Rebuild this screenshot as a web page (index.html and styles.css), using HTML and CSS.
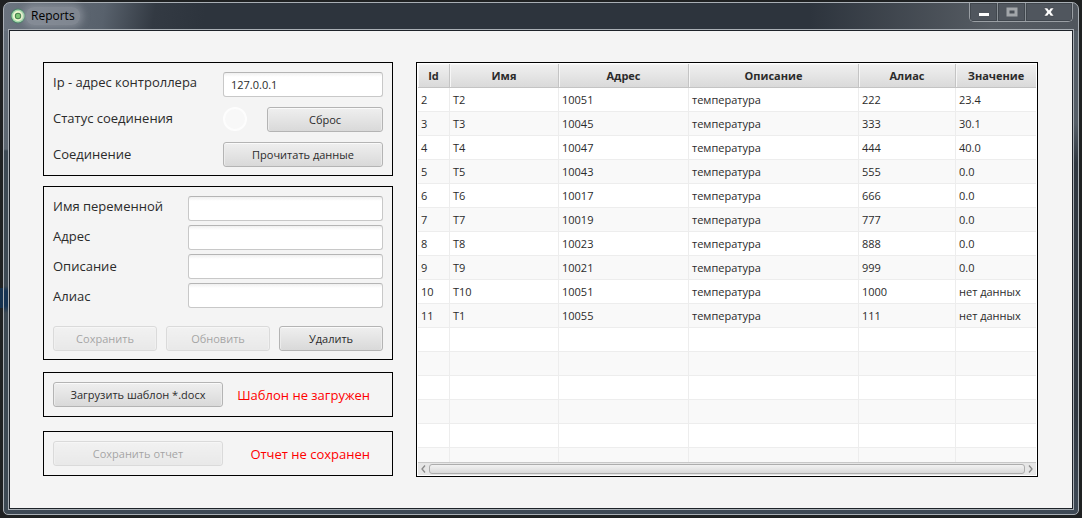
FILE: index.html
```html
<!DOCTYPE html>
<html lang="ru">
<head>
<meta charset="utf-8">
<title>Reports</title>
<link rel="stylesheet" href="styles.css">
</head>
<body>
<div class="window">
  <header class="titlebar">
    <svg class="app-icon" width="16" height="16" viewBox="0 0 16 16" aria-hidden="true">
      <circle cx="8" cy="8" r="7.400" fill="#4b7f68"/>
      <circle cx="8" cy="8" r="6.500" fill="#a6dcae"/>
      <circle cx="8" cy="8" r="5" fill="#f1fad2"/>
      <circle cx="8" cy="8" r="3.200" fill="#43804c"/>
      <circle cx="8" cy="8" r="2.200" fill="#7cc874"/>
    </svg>
    <h1 class="title">Reports</h1>
    <div class="controls">
      <button class="control" type="button" aria-label="Свернуть">
        <svg width="12" height="12" viewBox="0 0 12 12"><rect x="1" y="7" width="10" height="3" fill="#fff"/></svg>
      </button>
      <button class="control" type="button" aria-label="Развернуть" disabled>
        <svg width="12" height="12" viewBox="0 0 12 12"><rect x="2" y="3" width="8" height="6" fill="#4a5058" stroke="#a2a6aa" stroke-width="3"/></svg>
      </button>
      <button class="control control-close" type="button" aria-label="Закрыть">
        <svg width="12" height="12" viewBox="0 0 12 12"><path d="M1 2h3.400L6 4.200 7.600 2H11L8 6l3 4H7.600L6 7.800 4.400 10H1l3-4z" fill="#fff" stroke="#3a3f46" stroke-width=".5"/></svg>
      </button>
    </div>
  </header>

  <main class="client">
    <div class="sidebar">
      <form class="panel connection">
        <div class="labels labels-wide">
          <label for="ip">Ip - адрес контроллера</label>
          <span>Статус соединения</span>
          <span>Соединение</span>
        </div>
        <div class="fields">
          <input class="field" id="ip" type="text" value="127.0.0.1">
          <div class="status-row">
            <span class="status-light"></span>
            <button class="btn btn-reset" type="button">Сброс</button>
          </div>
          <button class="btn" type="button">Прочитать данные</button>
        </div>
      </form>

      <form class="panel variable">
        <div class="variable-form">
          <div class="labels">
            <label for="name">Имя переменной</label>
            <label for="address">Адрес</label>
            <label for="description">Описание</label>
            <label for="alias">Алиас</label>
          </div>
          <div class="fields">
            <input class="field" id="name" type="text">
            <input class="field" id="address" type="text">
            <input class="field" id="description" type="text">
            <input class="field" id="alias" type="text">
          </div>
        </div>
        <div class="actions">
          <button class="btn" type="button" disabled>Сохранить</button>
          <button class="btn" type="button" disabled>Обновить</button>
          <button class="btn" type="button">Удалить</button>
        </div>
      </form>

      <section class="panel file template">
        <button class="btn btn-file" type="button">Загрузить шаблон *.docx</button>
        <p class="message">Шаблон не загружен</p>
      </section>

      <section class="panel file report">
        <button class="btn btn-file" type="button" disabled>Сохранить отчет</button>
        <p class="message">Отчет не сохранен</p>
      </section>
    </div>

    <section class="grid-box">
      <div class="viewport">
        <table class="grid">
          <colgroup>
            <col class="c-id"><col class="c-name"><col class="c-address"><col class="c-description"><col class="c-alias"><col class="c-value">
          </colgroup>
          <thead>
            <tr><th>Id</th><th>Имя</th><th>Адрес</th><th>Описание</th><th>Алиас</th><th>Значение</th></tr>
          </thead>
          <tbody>
            <tr><td>2</td><td>T2</td><td>10051</td><td>температура</td><td>222</td><td>23.4</td></tr>
            <tr><td>3</td><td>T3</td><td>10045</td><td>температура</td><td>333</td><td>30.1</td></tr>
            <tr><td>4</td><td>T4</td><td>10047</td><td>температура</td><td>444</td><td>40.0</td></tr>
            <tr><td>5</td><td>T5</td><td>10043</td><td>температура</td><td>555</td><td>0.0</td></tr>
            <tr><td>6</td><td>T6</td><td>10017</td><td>температура</td><td>666</td><td>0.0</td></tr>
            <tr><td>7</td><td>T7</td><td>10019</td><td>температура</td><td>777</td><td>0.0</td></tr>
            <tr><td>8</td><td>T8</td><td>10023</td><td>температура</td><td>888</td><td>0.0</td></tr>
            <tr><td>9</td><td>T9</td><td>10021</td><td>температура</td><td>999</td><td>0.0</td></tr>
            <tr><td>10</td><td>T10</td><td>10051</td><td>температура</td><td>1000</td><td>нет данных</td></tr>
            <tr><td>11</td><td>T1</td><td>10055</td><td>температура</td><td>111</td><td>нет данных</td></tr>
            <tr><td></td><td></td><td></td><td></td><td></td><td></td></tr>
            <tr><td></td><td></td><td></td><td></td><td></td><td></td></tr>
            <tr><td></td><td></td><td></td><td></td><td></td><td></td></tr>
            <tr><td></td><td></td><td></td><td></td><td></td><td></td></tr>
            <tr><td></td><td></td><td></td><td></td><td></td><td></td></tr>
            <tr><td></td><td></td><td></td><td></td><td></td><td></td></tr>
          </tbody>
        </table>
      </div>
      <div class="scrollbar">
        <button class="arrow" type="button" aria-label="Влево">
          <svg width="5" height="8" viewBox="0 0 5 8"><path d="M4 .5L1 4l3 3.500" fill="none" stroke="#8a8a8a" stroke-width="1.300"/></svg>
        </button>
        <div class="thumb"></div>
        <button class="arrow" type="button" aria-label="Вправо">
          <svg width="5" height="8" viewBox="0 0 5 8"><path d="M1 .5L4 4 1 7.500" fill="none" stroke="#8a8a8a" stroke-width="1.300"/></svg>
        </button>
      </div>
    </section>
  </main>
</div>
</body>
</html>
```
FILE: styles.css
```css
* {
  box-sizing: border-box;
}

body {
  margin: 0;
  min-height: 100vh;
  padding: 2px 3px 3px;
  display: flex;
  background:
    linear-gradient(#14304d, #14304d) 0 288px / 3px 20px no-repeat,
    #1f2122;
  color: #2b2b2b;
  font: 11px/16px "Open Sans", "Noto Sans", sans-serif;
}

button,
input {
  margin: 0;
  font: inherit;
  color: inherit;
}

/* Window frame */
.window {
  flex: 1;
  min-width: 0;
  display: flex;
  flex-direction: column;
  padding: 0 5px 5px;
  border: 1px solid #a9afb5;
  border-radius: 7px 7px 5px 5px;
  background:
    linear-gradient(100deg, #6b747f 0, #58616c 100px, #333a43 150px, #2d343d 200px, transparent 300px) top / 100% 28px no-repeat,
    linear-gradient(90deg, #2d343d 0, #2d343d 75%, #565c63 92%, #50565d 100%) top / 100% 28px no-repeat,
    linear-gradient(#66707b 0, #5c6670 146px, #3d4953 148px, #3d4953 283px, #173453 288px, #173453 303px, #3d4953 310px) left / 6px 100% no-repeat,
    linear-gradient(#555e67 0, #555e67 120px, #2f3740 160px, #2f3740 410px, #3f4a56 100%);
}

.titlebar {
  display: flex;
  align-items: flex-start;
  height: 27px;
  padding-left: 1px;
}

.app-icon {
  margin-top: 5px;
}

.title {
  margin: 4px 0 0;
  padding: 0 5px;
  border-radius: 8px;
  background: rgba(170, 176, 184, .45);
  box-shadow: 0 0 7px 3px rgba(170, 176, 184, .45);
  color: #000;
  font-size: 12px;
  font-weight: 400;
  line-height: 18px;
}

.controls {
  display: flex;
  margin-left: auto;
  border: 1px solid #9a9fa4;
  border-top: 0;
  border-radius: 0 0 5px 5px;
  overflow: hidden;
}

.control {
  width: 28px;
  height: 18px;
  padding: 0;
  display: flex;
  align-items: center;
  justify-content: center;
  border: 0;
  border-right: 1px solid #8a9096;
  background: #50565e;
  box-shadow: inset 0 0 0 1px #41474e;
}

.control-close {
  width: 46px;
  border-right: 0;
}

.client {
  flex: 1;
  display: grid;
  grid-template-columns: 350px minmax(0, 1fr);
  align-items: start;
  gap: 23px;
  padding: 31px 34px 31px 33px;
  border: 1px solid #1d2229;
  outline: 1px solid #a9afb5;
  background: #f4f4f4;
}

/* Left column */
.panel {
  padding: 9px;
  border: 1px solid #000;
}

.connection,
.variable {
  padding-bottom: 8px;
}

.connection,
.variable-form {
  display: flex;
}

.variable {
  margin-top: 10px;
}

.template {
  margin-top: 12px;
}

.report {
  margin-top: 14px;
}

.labels {
  width: 135px;
  display: flex;
  flex-direction: column;
  gap: 10px;
  font-size: 13px;
  line-height: 20px;
}

.labels-wide {
  width: 170px;
  gap: 16px;
}

.fields {
  flex: 1;
  min-width: 0;
  display: flex;
  flex-direction: column;
  gap: 4px;
}

.connection .fields {
  gap: 10px;
}

.field {
  width: 100%;
  height: 25px;
  padding: 0 7px;
  border: 1px solid #c8c8c8;
  border-top-color: #b5b5b5;
  border-radius: 3px;
  background: linear-gradient(#f0f0f0, #fff 4px);
}

.status-row {
  display: flex;
  justify-content: space-between;
}

.status-light {
  width: 24px;
  height: 24px;
  border: 2px solid #fdfdfd;
  border-radius: 50%;
  background: #f8f8f8;
}

.btn {
  height: 25px;
  padding: 0 8px;
  border: 1px solid #b4b4b4;
  border-radius: 3px;
  background: linear-gradient(#efefef, #d9d9d9);
  box-shadow: inset 0 1px 0 #fafafa, inset 1px 0 0 #ececec, inset -1px 0 0 #ececec;
}

.btn:disabled {
  opacity: .4;
}

.btn-reset {
  width: 116px;
}

.actions {
  display: grid;
  grid-template-columns: repeat(3, 1fr);
  gap: 9px;
  margin-top: 18px;
}

.file {
  display: flex;
  align-items: center;
  justify-content: space-between;
}

.btn-file {
  width: 170px;
}

.message {
  margin: 0;
  padding-right: 13px;
  color: #f00;
  font-size: 13px;
  line-height: 20px;
}

/* Data grid */
.grid-box {
  align-self: stretch;
  display: flex;
  flex-direction: column;
  padding: 1px;
  border: 1px solid #000;
  background: #fff;
}

.viewport {
  flex: 1;
  contain: size;
  overflow: hidden;
}

.grid {
  width: 100%;
  table-layout: fixed;
  border-collapse: separate;
  border-spacing: 0;
}

.c-id { width: 32px; }
.c-name { width: 109px; }
.c-address { width: 130px; }
.c-description { width: 170px; }
.c-alias { width: 97px; }

.grid th,
.grid td {
  height: 24px;
  padding: 0 3px;
  border-right: 1px solid #ededed;
  border-bottom: 1px solid #ededed;
  white-space: nowrap;
}

.grid th {
  border-color: #c4c4c4;
  background: linear-gradient(#f0f0f0, #dadada);
  box-shadow: inset 1px 1px 0 #f6f6f6;
  font-weight: 700;
}

.grid th:last-child,
.grid td:last-child {
  border-right: 0;
}

.grid td {
  text-align: left;
}

.grid tbody tr:nth-child(even) {
  background: #f9f9f9;
}

.scrollbar {
  height: 13px;
  display: flex;
  align-items: center;
  border-top: 1px solid #c8c8c8;
  background: #e6e6e6;
}

.arrow {
  width: 11px;
  height: 12px;
  padding: 0;
  display: flex;
  align-items: center;
  justify-content: center;
  border: 0;
  background: none;
}

.thumb {
  flex: 1;
  height: 10px;
  border: 1px solid #adadad;
  border-radius: 3px;
  background: linear-gradient(#f2f2f2, #dadada);
}
```
